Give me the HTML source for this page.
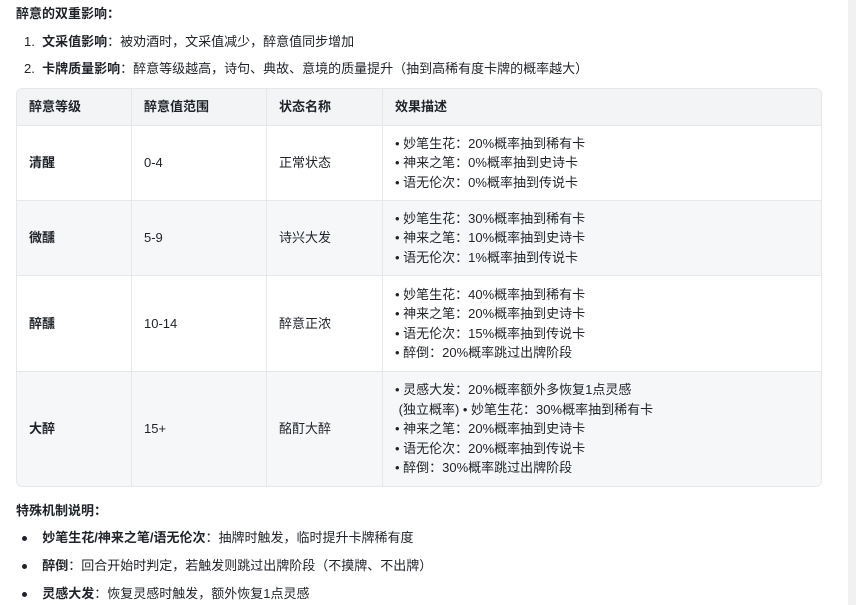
<!DOCTYPE html>
<html><head><meta charset="utf-8"><style>
*{margin:0;padding:0;box-sizing:border-box}
body{width:856px;height:605px;overflow:hidden;background:#fff;font-family:"Liberation Sans","Noto Sans CJK SC",sans-serif;font-size:13px;color:#1f2329;position:relative}
.a{position:absolute;white-space:nowrap}
b{font-weight:700}
.sb{position:absolute;right:0;top:0;width:8px;height:605px;background:#f1f1f1}
table{position:absolute;left:16px;top:88px;width:806px;border-collapse:separate;border-spacing:0;border:1px solid #e5e7eb;border-radius:6px;overflow:hidden}
td,th{border-right:1px solid #e5e7eb;border-bottom:1px solid #e5e7eb;padding:0 12px;text-align:left;vertical-align:middle;line-height:19.5px}
th{height:37px;background:#f3f4f6;font-weight:700}
td:last-child,th:last-child{border-right:none}
tr:last-child td{border-bottom:none}
tr.g td{background:#f6f7f9}
.w1{width:115px}.w2{width:135px}.w3{width:116px}
.dot{display:inline-block;width:4px;height:4px;border-radius:50%;background:#1f2329;vertical-align:middle;margin-right:8px}
</style></head><body>
<div class="a" style="left:16px;top:3px"><b>醉意的双重影响：</b></div>
<div class="a" style="left:24px;top:31px">1.&nbsp; <b>文采值影响</b>：被劝酒时，文采值减少，醉意值同步增加</div>
<div class="a" style="left:24px;top:58px">2.&nbsp; <b>卡牌质量影响</b>：醉意等级越高，诗句、典故、意境的质量提升（抽到高稀有度卡牌的概率越大）</div>
<table>
<tr><th class="w1">醉意等级</th><th class="w2">醉意值范围</th><th class="w3">状态名称</th><th>效果描述</th></tr>
<tr style="height:75px"><td><b>清醒</b></td><td>0-4</td><td>正常状态</td><td>• 妙笔生花：20%概率抽到稀有卡<br>• 神来之笔：0%概率抽到史诗卡<br>• 语无伦次：0%概率抽到传说卡</td></tr>
<tr class="g" style="height:75px"><td><b>微醺</b></td><td>5-9</td><td>诗兴大发</td><td>• 妙笔生花：30%概率抽到稀有卡<br>• 神来之笔：10%概率抽到史诗卡<br>• 语无伦次：1%概率抽到传说卡</td></tr>
<tr style="height:96px"><td><b>醉醺</b></td><td>10-14</td><td>醉意正浓</td><td>• 妙笔生花：40%概率抽到稀有卡<br>• 神来之笔：20%概率抽到史诗卡<br>• 语无伦次：15%概率抽到传说卡<br>• 醉倒：20%概率跳过出牌阶段</td></tr>
<tr class="g" style="height:114px"><td><b>大醉</b></td><td>15+</td><td>酩酊大醉</td><td>• 灵感大发：20%概率额外多恢复1点灵感<br>&nbsp;(独立概率) • 妙笔生花：30%概率抽到稀有卡<br>• 神来之笔：20%概率抽到史诗卡<br>• 语无伦次：20%概率抽到传说卡<br>• 醉倒：30%概率跳过出牌阶段</td></tr>
</table>
<div class="a" style="left:16px;top:500px"><b>特殊机制说明：</b></div>
<div class="a" style="left:22px;top:527px"><span class="dot" style="width:5px;height:5px"></span>&nbsp; <b>妙笔生花/神来之笔/语无伦次</b>：抽牌时触发，临时提升卡牌稀有度</div>
<div class="a" style="left:22px;top:555px"><span class="dot" style="width:5px;height:5px"></span>&nbsp; <b>醉倒</b>：回合开始时判定，若触发则跳过出牌阶段（不摸牌、不出牌）</div>
<div class="a" style="left:22px;top:583px"><span class="dot" style="width:5px;height:5px"></span>&nbsp; <b>灵感大发</b>：恢复灵感时触发，额外恢复1点灵感</div>
<div class="sb"></div>
</body></html>
